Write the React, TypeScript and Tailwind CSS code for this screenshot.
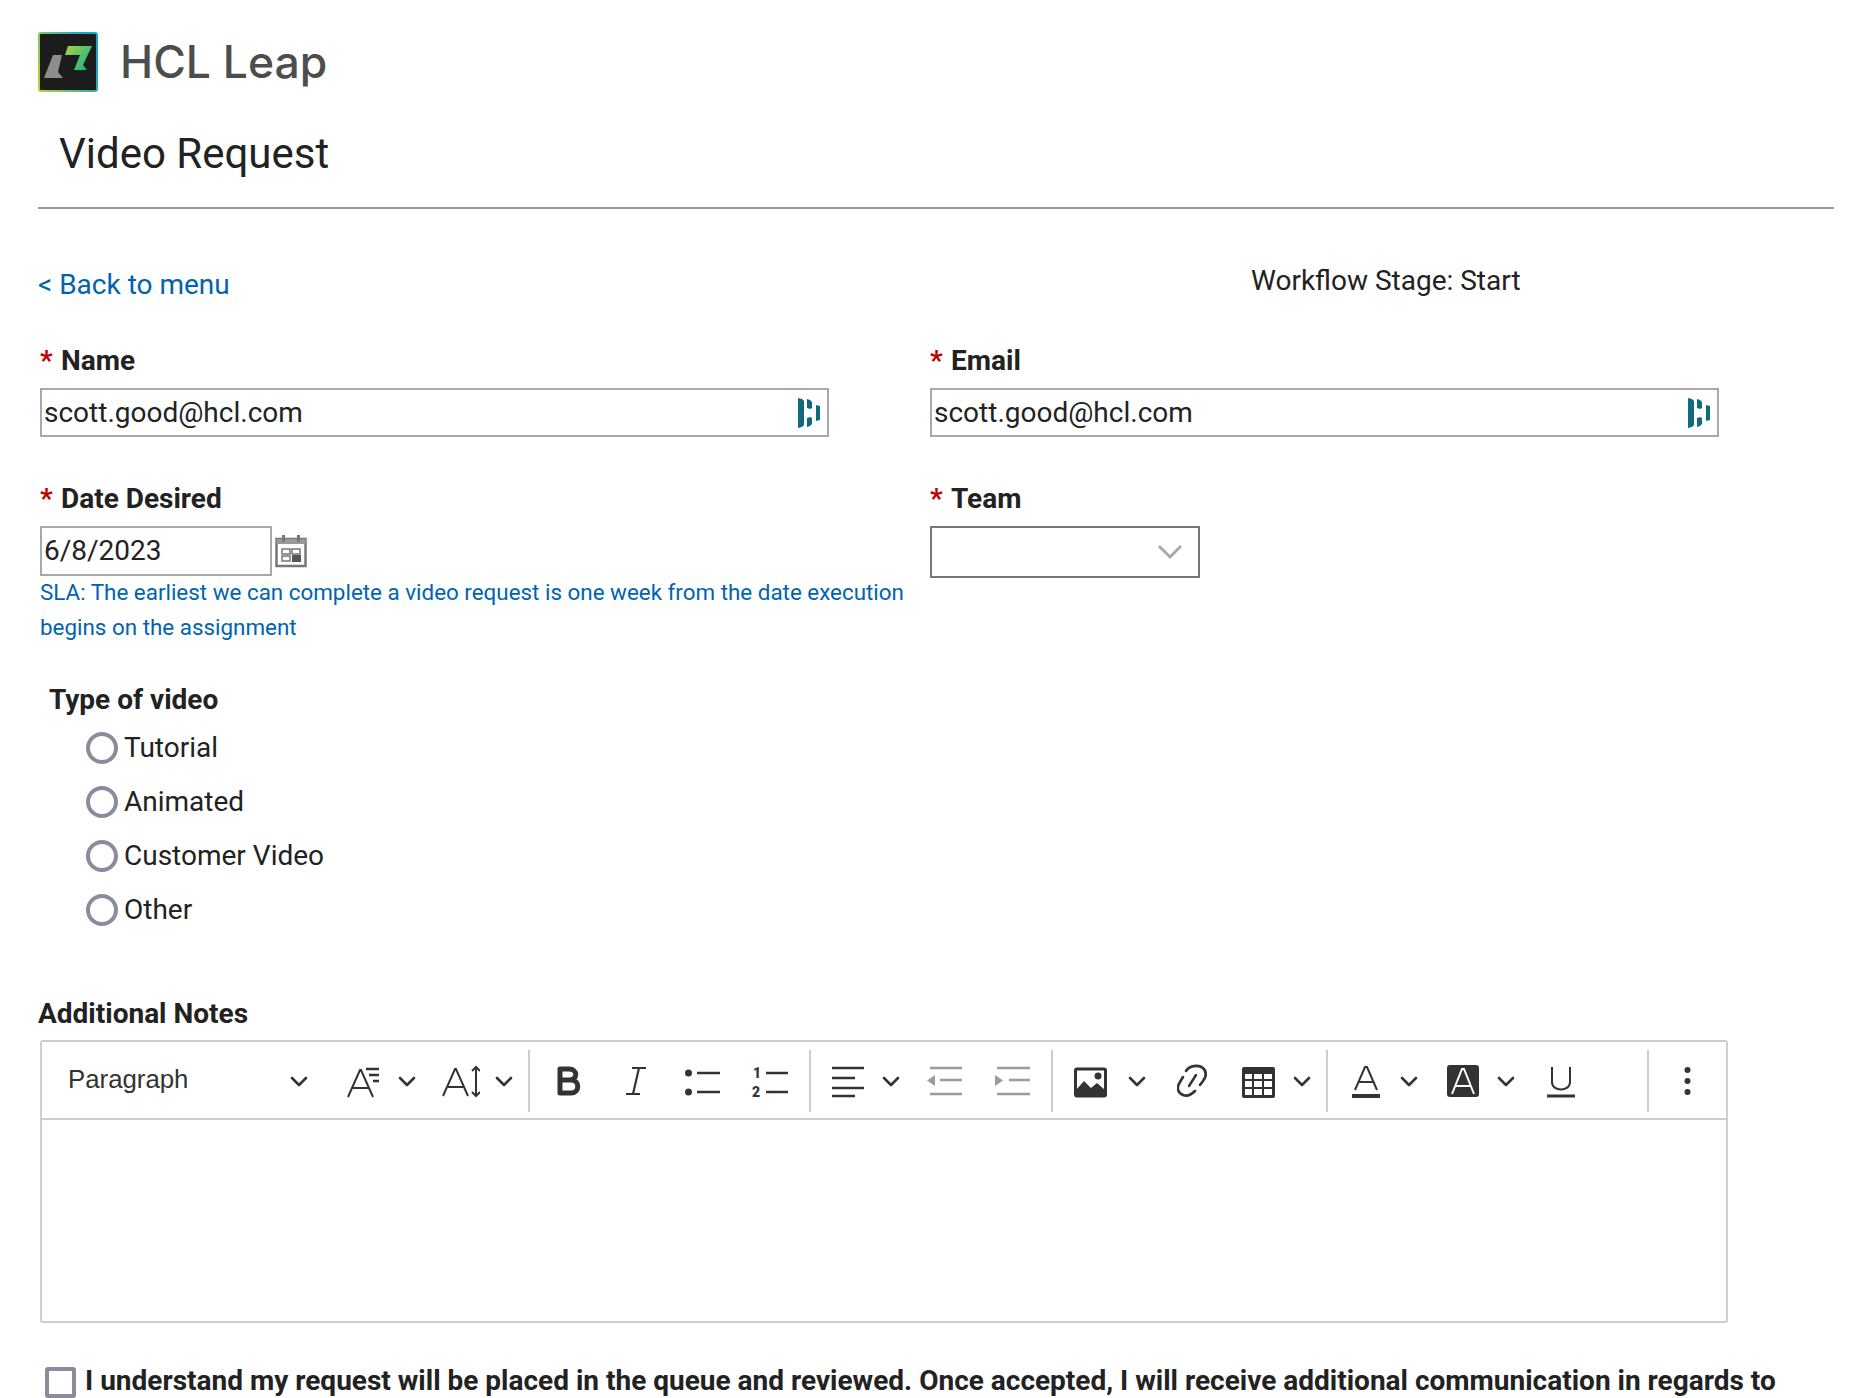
import type { ReactNode } from "react";

function Ico({ w, h = 34, ml = 0, children }: { w: number; h?: number; ml?: number; children: ReactNode }) {
  return (
    <svg
      width={w}
      height={h}
      viewBox={`0 0 ${w} ${h}`}
      style={{ marginLeft: ml }}
      className="shrink-0"
      fill="none"
      stroke="#333"
      strokeWidth="2"
    >
      {children}
    </svg>
  );
}

function Chev({ ml }: { ml: number }) {
  return (
    <Ico w={18} ml={ml}>
      <path d="M2 14l7 7 7-7" strokeWidth="2.6" strokeLinecap="round" strokeLinejoin="round" />
    </Ico>
  );
}

function Sep({ ml }: { ml: number }) {
  return <div style={{ marginLeft: ml }} className="h-[62px] w-[2px] shrink-0 bg-[#ccced1]" />;
}

function Logo() {
  return (
    <svg width="60" height="60" viewBox="0 0 60 60" className="shrink-0">
      <defs>
        <linearGradient id="edge" x1="0" y1="1" x2="1" y2="0.6">
          <stop offset="0" stopColor="#b5d334" />
          <stop offset="1" stopColor="#1aa7c4" />
        </linearGradient>
        <linearGradient id="leaf" x1="0" y1="0" x2="1" y2="0.7">
          <stop offset="0" stopColor="#a8d63d" />
          <stop offset="1" stopColor="#1fb38f" />
        </linearGradient>
      </defs>
      <rect x="1" y="1" width="58" height="58" rx="2" fill="#1c1c1c" stroke="url(#edge)" strokeWidth="2" />
      <polygon points="15,23 24,23 20,40 25,46 6,46" fill="#8c8c8c" />
      <polygon points="30,14 54,14 45,33 49,38 36,38 42,23 27,23" fill="url(#leaf)" />
    </svg>
  );
}

function FieldIcon() {
  return (
    <svg width="22" height="30" viewBox="0 0 22 30" className="shrink-0">
      <polygon points="0,0 4,1 6,3 6,27 4,29 0,30" fill="#0f6b7c" />
      <polygon points="9,1 12,2 14,4 14,10 12,11 9,10" fill="#0f6b7c" />
      <polygon points="9,20 12,19 14,20 14,26 12,28 9,29" fill="#0f6b7c" />
      <polygon points="18,7 22,8 22,22 18,23" fill="#0f6b7c" />
    </svg>
  );
}

function Calendar() {
  return (
    <svg width="32" height="34" viewBox="0 0 32 34" className="ml-[3px] shrink-0">
      <rect x="1.5" y="5" width="29" height="27" fill="none" stroke="#777" strokeWidth="2.5" />
      <rect x="1.5" y="5" width="29" height="5" fill="#999" />
      <rect x="7" y="1" width="3" height="7" fill="#777" />
      <rect x="22" y="1" width="3" height="7" fill="#777" />
      <rect x="7" y="15" width="8" height="5" fill="none" stroke="#777" strokeWidth="1.5" />
      <rect x="7" y="22" width="8" height="5" fill="none" stroke="#777" strokeWidth="1.5" />
      <rect x="17" y="15" width="8" height="5" fill="none" stroke="#777" strokeWidth="1.5" />
      <rect x="17" y="21" width="9" height="7" fill="#555" />
    </svg>
  );
}

function Label({ text }: { text: string }) {
  return (
    <div className="flex h-[34px] items-center text-[28px] leading-[34px] font-bold text-[#222]">
      <span className="mr-[8px] w-[13px] text-[#c00000]">*</span>
      {text}
    </div>
  );
}

function TextField() {
  return (
    <div className="flex h-[49px] w-[789px] items-center justify-between border-2 border-[#a9a9a9] pr-[7px] pl-[2px] text-[28px] text-[#222]">
      scott.good@hcl.com
      <FieldIcon />
    </div>
  );
}

function Radio({ text }: { text: string }) {
  return (
    <div className="flex h-[54px] items-center text-[28px] text-[#222]">
      <span className="mr-[6px] h-[32px] w-[32px] rounded-full border-[4px] border-[#8b8b9c]" />
      {text}
    </div>
  );
}

function Toolbar() {
  return (
    <div className="flex h-[78px] items-center border-b-2 border-[#ccced1] pt-[2px] pl-[26px] text-[#333]">
      <span className="-mt-[4px] w-[221px] shrink-0 font-['Liberation_Sans',sans-serif] text-[25.800px]">Paragraph</span>
      <Chev ml={1} />
      {/* font family */}
      <Ico w={34} ml={38}>
        <path d="M2 33L14 6h1l12 27M7 24h16" />
        <path d="M20 5h13M23 11h10M27 17h6" strokeWidth="2.6" />
      </Ico>
      <Chev ml={18} />
      {/* line height */}
      <Ico w={38} ml={26}>
        <path d="M1 32L13 5h1l12 27M6 23h16" />
        <path d="M34 3v29M30 7l4-4 4 4M30 28l4 4 4-4" />
      </Ico>
      <Chev ml={15} />
      <Sep ml={15} />
      {/* bold */}
      <Ico w={25} ml={26}>
        <path d="M4 5h9c9 0 9 11 0 11H4zM4 16h11c9 0 9 13 0 13H4z" strokeWidth="5" strokeLinejoin="round" />
      </Ico>
      {/* italic */}
      <Ico w={20} ml={45}>
        <path d="M6 4h14M0 30h14M13 4L7 30" strokeWidth="2.2" />
      </Ico>
      {/* bullets */}
      <Ico w={35} ml={39}>
        <circle cx="3.5" cy="9" r="3.5" fill="#333" stroke="none" />
        <circle cx="3.5" cy="28" r="3.5" fill="#333" stroke="none" />
        <path d="M12 9h23M12 28h23" strokeWidth="2.6" />
      </Ico>
      {/* numbered */}
      <Ico w={36} h={40} ml={32}>
        <text x="1" y="17" fill="#333" stroke="none" className="font-['Roboto',sans-serif] text-[14px] font-black">1</text>
        <text x="0" y="36" fill="#333" stroke="none" className="font-['Roboto',sans-serif] text-[14px] font-black">2</text>
        <path d="M14 12h22M14 31h22" strokeWidth="2.6" />
      </Ico>
      <Sep ml={21} />
      {/* align */}
      <Ico w={32} ml={21}>
        <path d="M0 4h32M0 14h23M0 24h32M0 32h23" strokeWidth="2.6" />
      </Ico>
      <Chev ml={18} />
      {/* outdent */}
      <Ico w={35} ml={27}>
        <path d="M3 4h32M13 16h22M3 30h32" stroke="#9b9b9b" strokeWidth="2.6" />
        <path d="M8 11v11l-8-5.500z" fill="#9b9b9b" stroke="none" />
      </Ico>
      {/* indent */}
      <Ico w={35} ml={33}>
        <path d="M2 4h33M14 16h21M2 30h33" stroke="#9b9b9b" strokeWidth="2.6" />
        <path d="M0 11v11l8-5.500z" fill="#9b9b9b" stroke="none" />
      </Ico>
      <Sep ml={21} />
      {/* image */}
      <Ico w={33} ml={21}>
        <rect x="1.500" y="5" width="30" height="27" rx="1.500" strokeWidth="3" />
        <path d="M2 31V26l8-9 7 7 6-5 8 7v5z" fill="#333" stroke="none" />
        <circle cx="24" cy="12" r="3.500" fill="#333" stroke="none" />
      </Ico>
      <Chev ml={21} />
      {/* link */}
      <Ico w={30} ml={31}>
        <path d="M12 22L19 11" strokeWidth="2.4" strokeLinecap="round" />
        <path d="M9 7C12 2 21 0 26 4C30 8 29 13 26 17L23 21" strokeWidth="2.6" strokeLinecap="round" />
        <path d="M6 13L3 18C-1 24 1 29 6 31C11 33 15 30 18 27" strokeWidth="2.6" strokeLinecap="round" />
      </Ico>
      {/* table */}
      <Ico w={33} ml={35}>
        <rect x="0" y="3" width="33" height="31" rx="2" fill="#333" stroke="none" />
        <path d="M3 10h7v5H3zM12 10h8v5h-8zM22 10h8v5h-8zM3 17h7v6H3zM12 17h8v6h-8zM22 17h8v6h-8zM3 25h7v6H3zM12 25h8v6h-8zM22 25h8v6h-8z" fill="#fff" stroke="none" />
      </Ico>
      <Chev ml={18} />
      <Sep ml={15} />
      {/* font color */}
      <Ico w={28} ml={24}>
        <path d="M3 26L13 3h2l10 23M7 18h14" />
        <path d="M0 32h28" strokeWidth="4" strokeLinecap="round" />
      </Ico>
      <Chev ml={20} />
      {/* font background */}
      <Ico w={32} ml={29}>
        <rect x="0" y="1" width="32" height="32" rx="3" fill="#333" stroke="none" />
        <path d="M5 30L15 5h2l10 25M9 22h14" stroke="#fff" />
      </Ico>
      <Chev ml={18} />
      {/* underline */}
      <Ico w={28} ml={32}>
        <path d="M5 3v15c0 10 18 10 18 0V3" />
        <path d="M0 32h28" strokeWidth="3" />
      </Ico>
      <Sep ml={72} />
      {/* more */}
      <Ico w={7} ml={35}>
        <circle cx="3.500" cy="6" r="3" fill="#333" stroke="none" />
        <circle cx="3.500" cy="17" r="3" fill="#333" stroke="none" />
        <circle cx="3.500" cy="28" r="3" fill="#333" stroke="none" />
      </Ico>
    </div>
  );
}

export default function App() {
  return (
    <div className="h-[1398px] w-[1856px] overflow-hidden bg-white font-['Roboto',sans-serif] text-[#222]">
      {/* header */}
      <div className="flex items-center pt-[32px] pl-[38px]">
        <Logo />
        <span className="ml-[22px] font-['Inter',sans-serif] text-[44.500px] leading-[60px] font-medium text-[#4d4d4d]">HCL Leap</span>
      </div>
      <h1 className="mt-[37px] pl-[59px] text-[42px] leading-[50px]">Video Request</h1>
      <div className="mt-[28px] ml-[38px] h-[2px] w-[1796px] bg-[#999]" />

      {/* back link + stage */}
      <div className="mt-[57px] flex h-[38px] items-center pl-[38px]">
        <span className="w-[1213px] text-[28px] text-[#0063b1]">&lt; Back to menu</span>
        <span className="-mt-[8px] text-[28px]">Workflow Stage: Start</span>
      </div>

      {/* fields */}
      <div className="mt-[40px] grid grid-cols-[892px_1fr] pl-[38px]">
        <div className="pl-[2px]">
          <Label text="Name" />
          <div className="mt-[10px]">
            <TextField />
          </div>
        </div>
        <div>
          <Label text="Email" />
          <div className="mt-[10px]">
            <TextField />
          </div>
        </div>
      </div>

      <div className="mt-[45px] grid grid-cols-[892px_1fr] pl-[38px]">
        <div className="pl-[2px]">
          <Label text="Date Desired" />
          <div className="mt-[10px] flex items-center">
            <div className="flex h-[50px] w-[232px] items-center border-2 border-[#a9a9a9] pl-[2px] text-[28px]">6/8/2023</div>
            <Calendar />
          </div>
          <p className="-mt-[1px] w-[880px] text-[22.400px] leading-[35px] text-[#0063b1]">
            SLA: The earliest we can complete a video request is one week from the date execution begins on the assignment
          </p>
        </div>
        <div>
          <Label text="Team" />
          <div className="mt-[10px] flex h-[52px] w-[270px] items-center justify-end border-2 border-[#777] pr-[15px]">
            <svg width="26" height="16" viewBox="0 0 26 16" fill="none" stroke="#aaa" strokeWidth="3">
              <path d="M2 2l11 11L24 2" />
            </svg>
          </div>
        </div>
      </div>

      {/* video type */}
      <div className="mt-[38px] pl-[49px] text-[28px] leading-[34px] font-bold">Type of video</div>
      <div className="mt-[4px] pl-[86px]">
        <Radio text="Tutorial" />
        <Radio text="Animated" />
        <Radio text="Customer Video" />
        <Radio text="Other" />
      </div>

      {/* notes */}
      <div className="mt-[60px] pl-[38px] text-[28px] leading-[34px] font-bold">Additional Notes</div>
      <div className="mt-[9px] ml-[40px] h-[283px] w-[1688px] rounded-[3px] border-2 border-[#ccced1]">
        <Toolbar />
      </div>

      {/* agreement */}
      <div className="mt-[44px] flex h-[31px] items-center pl-[45px]">
        <span className="mr-[9px] h-[31px] w-[31px] shrink-0 rounded-[3px] border-[4px] border-[#8b8b9c]" />
        <span className="-mt-[3px] text-[28px] leading-[30px] font-bold whitespace-nowrap">
          I understand my request will be placed in the queue and reviewed. Once accepted, I will receive additional communication in regards to
        </span>
      </div>
    </div>
  );
}
